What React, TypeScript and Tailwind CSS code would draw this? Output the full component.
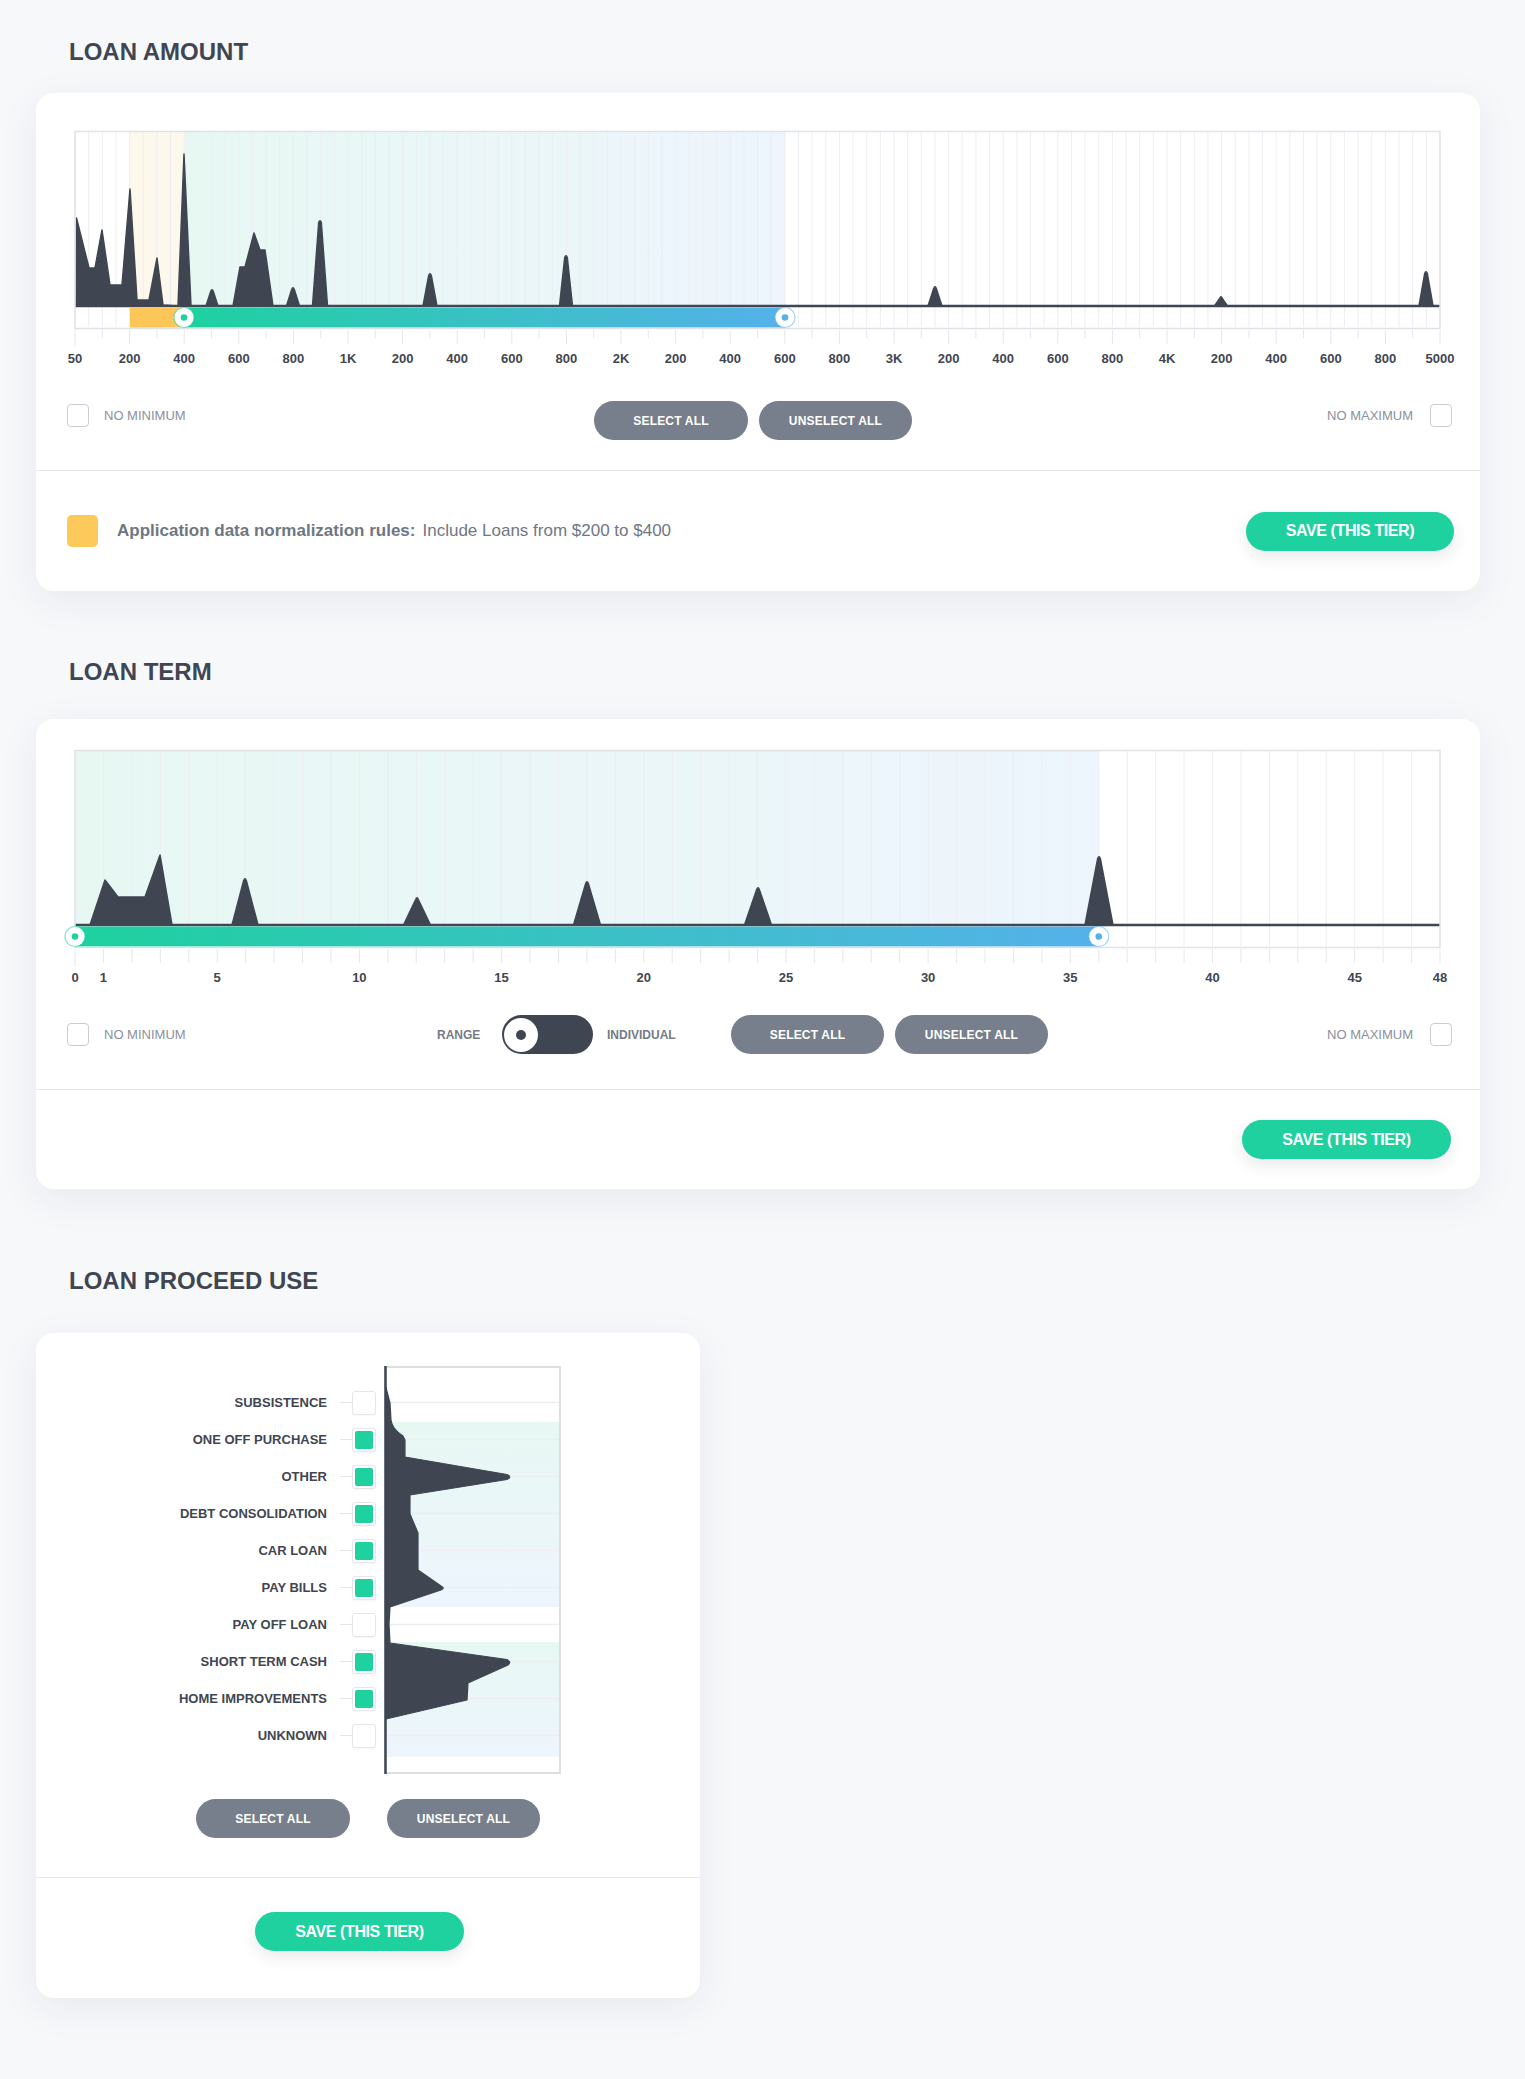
import React from 'react'

// ─── Palette ──────────────────────────────────────────────────────────────────

const DARK = '#3f4651'
const GREEN = '#1ed19f'
const BLUE = '#55b1ea'

// ─── Small building blocks ────────────────────────────────────────────────────

function Title({ children, className }: { children: React.ReactNode; className: string }) {
  return (
    <h2 className={`ml-[33px] text-[24px] leading-[24px] font-bold text-[#3f4651] ${className}`}>
      {children}
    </h2>
  )
}

function CheckBox() {
  return <span className="block w-[22px] h-[23px] rounded-[4px] border-[1.5px] border-[#c9cdd3] bg-white shrink-0" />
}

function GrayButton({ label, className }: { label: string; className: string }) {
  return (
    <button className={`h-[39px] rounded-full bg-[#767f8b] text-white text-[12px] font-bold tracking-[0.2px] ${className}`}>
      {label}
    </button>
  )
}

function SaveButton({ className }: { className: string }) {
  return (
    <button
      className={`h-[39px] rounded-full bg-[#1ed19f] text-white text-[16px] font-bold tracking-[-0.4px] shadow-[0_6px_16px_rgba(30,40,60,0.10)] ${className}`}
    >
      SAVE (THIS TIER)
    </button>
  )
}

function NoMinimum() {
  return (
    <div className="flex items-center gap-[15px]">
      <CheckBox />
      <span className="text-[13px] text-[#8a919b] uppercase">No minimum</span>
    </div>
  )
}

function NoMaximum() {
  return (
    <div className="flex items-center gap-[17px]">
      <span className="text-[13px] text-[#8a919b] uppercase">No maximum</span>
      <CheckBox />
    </div>
  )
}

// ─── Chart helpers ────────────────────────────────────────────────────────────

const BASE = 176

function peak(cx: number, tip: number, hw: number) {
  return `M${cx - hw} ${BASE} L${cx - 1.3} ${tip + 2.5} Q${cx} ${tip - 1} ${cx + 1.3} ${tip + 2.5} L${cx + hw} ${BASE} Z`
}

function poly(points: [number, number][]) {
  return 'M' + points.map(p => `${p[0]} ${p[1]}`).join(' L') + ' Z'
}

function Handle({ cx, color }: { cx: number; color: string }) {
  return (
    <g>
      <circle cx={cx} cy={187.5} r={10} fill="#fff" stroke={color} strokeOpacity={0.55} strokeWidth={1.2} />
      <circle cx={cx} cy={187.5} r={3.3} fill={color} />
    </g>
  )
}

// ─── Loan amount chart ────────────────────────────────────────────────────────

const AMOUNT_LABELS = [
  '50', '200', '400', '600', '800', '1K', '200', '400', '600', '800', '2K', '200', '400',
  '600', '800', '3K', '200', '400', '600', '800', '4K', '200', '400', '600', '800', '5000',
]

function AmountChart() {
  const step = 1365 / 25
  const q = step / 4

  const clusterA: [number, number][] = [
    [40, 176], [40.5, 88], [53, 138], [59, 138], [66, 100], [74, 155], [86, 155], [94, 59],
    [101, 170], [113, 170], [121, 128], [127, 175], [142, 176], [148, 24], [155, 176],
  ]
  const clusterB: [number, number][] = [
    [197, 176], [204, 137], [209, 137], [218, 103], [224, 120], [229, 120], [237, 176],
  ]
  const singles: [number, number, number][] = [
    [176, 159, 6], [257, 157, 6.5], [284, 90, 7.5], [394, 143, 7], [530, 125, 6.5],
    [899, 156, 7], [1185, 166, 6.5], [1390, 141, 7],
  ]

  return (
    <svg width={1444} height={240} className="block">
      <defs>
        <linearGradient id="amtTint" gradientUnits="userSpaceOnUse" x1="149" y1="0" x2="749" y2="0">
          <stop offset="0" stopColor="#e7f8f3" />
          <stop offset="1" stopColor="#eef5fd" />
        </linearGradient>
        <linearGradient id="amtBar" gradientUnits="userSpaceOnUse" x1="148" y1="0" x2="749" y2="0">
          <stop offset="0" stopColor={GREEN} />
          <stop offset="1" stopColor={BLUE} />
        </linearGradient>
      </defs>

      <rect x={39} y={2} width={1365} height={196} fill="#fff" />
      <rect x={94} y={2} width={55} height={174} fill="#fdf8ec" />
      <rect x={149} y={2} width={600} height={174} fill="url(#amtTint)" />

      {Array.from({ length: 99 }, (_, i) => (
        <line key={i} x1={39 + (i + 1) * q} x2={39 + (i + 1) * q} y1={2} y2={197} stroke="#eceef2" strokeWidth={1} />
      ))}

      <g fill={DARK} stroke={DARK} strokeWidth={1.5} strokeLinejoin="round">
        <path d={poly(clusterA)} />
        <path d={poly(clusterB)} />
        {singles.map(([cx, tip, hw], i) => <path key={i} d={peak(cx, tip, hw)} />)}
      </g>
      <line x1={39} x2={1404} y1={BASE} y2={BASE} stroke={DARK} strokeWidth={2.5} />

      <rect x={94} y={177.5} width={54} height={20} fill="#fcc659" />
      <rect x={148} y={177.5} width={601} height={20} fill="url(#amtBar)" />

      <rect x={39} y={1.5} width={1365} height={197} fill="none" stroke="#dfe1e6" strokeWidth={1.5} />

      <Handle cx={148} color={GREEN} />
      <Handle cx={749} color={BLUE} />

      {Array.from({ length: 51 }, (_, i) => (
        <line
          key={i}
          x1={39 + i * step / 2} x2={39 + i * step / 2}
          y1={200} y2={i === 0 ? 217 : i % 2 === 0 ? 214 : 208}
          stroke="#e5e7eb" strokeWidth={1}
        />
      ))}
      {AMOUNT_LABELS.map((l, i) => (
        <text key={i} x={39 + i * step} y={232.5} textAnchor="middle" fontSize={13} fontWeight={700} fill={DARK}>
          {l}
        </text>
      ))}
    </svg>
  )
}

// ─── Loan term chart ──────────────────────────────────────────────────────────

const TERM_LABELS = [0, 1, 5, 10, 15, 20, 25, 30, 35, 40, 45, 48]

function TermChart() {
  const u = 1365 / 48
  const end = 39 + 36 * u

  const cluster: [number, number][] = [
    [54, 176], [69, 131], [82, 148], [109, 148], [124, 106], [136, 176],
  ]
  const singles: [number, number, number][] = [
    [209, 129, 13], [381, 148, 13.5], [551, 132, 13.5], [722, 138, 13.5], [1063, 107, 14],
  ]

  return (
    <svg width={1444} height={240} className="block">
      <defs>
        <linearGradient id="termTint" gradientUnits="userSpaceOnUse" x1="39" y1="0" x2={end} y2="0">
          <stop offset="0" stopColor="#e7f8f3" />
          <stop offset="1" stopColor="#eef5fd" />
        </linearGradient>
        <linearGradient id="termBar" gradientUnits="userSpaceOnUse" x1="39" y1="0" x2={end} y2="0">
          <stop offset="0" stopColor={GREEN} />
          <stop offset="1" stopColor={BLUE} />
        </linearGradient>
      </defs>

      <rect x={39} y={2} width={1365} height={196} fill="#fff" />
      <rect x={39} y={2} width={end - 39} height={174} fill="url(#termTint)" />

      {Array.from({ length: 47 }, (_, i) => (
        <line key={i} x1={39 + (i + 1) * u} x2={39 + (i + 1) * u} y1={2} y2={197} stroke="#eceef2" strokeWidth={1} />
      ))}

      <g fill={DARK} stroke={DARK} strokeWidth={1.5} strokeLinejoin="round">
        <path d={poly(cluster)} />
        {singles.map(([cx, tip, hw], i) => <path key={i} d={peak(cx, tip, hw)} />)}
      </g>
      <line x1={39} x2={1404} y1={BASE} y2={BASE} stroke={DARK} strokeWidth={2.5} />

      <rect x={39} y={177.5} width={end - 39} height={20} fill="url(#termBar)" />

      <rect x={39} y={1.5} width={1365} height={197} fill="none" stroke="#dfe1e6" strokeWidth={1.5} />

      <Handle cx={39} color={GREEN} />
      <Handle cx={end} color={BLUE} />

      {Array.from({ length: 49 }, (_, i) => (
        <line
          key={i}
          x1={39 + i * u} x2={39 + i * u}
          y1={200} y2={i === 0 ? 218 : 214}
          stroke="#e5e7eb" strokeWidth={1}
        />
      ))}
      {TERM_LABELS.map(v => (
        <text key={v} x={39 + v * u} y={232.5} textAnchor="middle" fontSize={13} fontWeight={700} fill={DARK}>
          {v}
        </text>
      ))}
    </svg>
  )
}

// ─── Loan proceed use chart ───────────────────────────────────────────────────

const USES: { label: string; on: boolean }[] = [
  { label: 'Subsistence', on: false },
  { label: 'One off purchase', on: true },
  { label: 'Other', on: true },
  { label: 'Debt consolidation', on: true },
  { label: 'Car loan', on: true },
  { label: 'Pay bills', on: true },
  { label: 'Pay off loan', on: false },
  { label: 'Short term cash', on: true },
  { label: 'Home improvements', on: true },
  { label: 'Unknown', on: false },
]

function UseChart() {
  const area =
    'M1 18 L6 37 L7 54 Q8 63 19 70 L21 74 L21 91 L123 108.5 Q128.5 111 123 113.5 L26 129 L26 148 ' +
    'L34 167 L34 204 L57 220 Q61.5 222 57 224 L6 241 L5 258 L6 277 L123 293.5 Q128.5 296.5 123 299.5 ' +
    'L84 317 L83 334 L2 353 L1 353 Z'

  return (
    <svg width={177} height={408} className="block shrink-0">
      <defs>
        <linearGradient id="useTint" x1="0" y1="0" x2="0" y2="1">
          <stop offset="0" stopColor="#e7f8f3" />
          <stop offset="1" stopColor="#eef5fd" />
        </linearGradient>
      </defs>
      <rect x={0} y={0} width={177} height={408} fill="#fff" />
      <rect x={2} y={56} width={173} height={185} fill="url(#useTint)" />
      <rect x={2} y={276} width={173} height={115} fill="url(#useTint)" />
      {USES.map((_, i) => (
        <line key={i} x1={2} x2={175} y1={36.5 + i * 37} y2={36.5 + i * 37} stroke="#eceef1" strokeWidth={1.5} />
      ))}
      <path d={area} fill={DARK} stroke={DARK} strokeWidth={1.2} strokeLinejoin="round" />
      <rect x={1} y={1} width={175} height={406} fill="none" stroke="#dcdee3" strokeWidth={2} />
      <line x1={1.5} x2={1.5} y1={0} y2={408} stroke={DARK} strokeWidth={2.5} />
    </svg>
  )
}

// ─── Page ─────────────────────────────────────────────────────────────────────

const CARD = 'bg-white rounded-[18px] shadow-[0_10px_40px_rgba(35,45,85,0.07)] overflow-hidden'

export default function App() {
  return (
    <div className="min-h-[2079px] w-full bg-[#f7f8fa] pl-[36px] pt-[40px] font-['Liberation_Sans',Arial,sans-serif]">

      {/* Loan amount */}
      <Title className="">LOAN AMOUNT</Title>
      <div className={`${CARD} mt-[29px] w-[1444px]`}>
        <div className="pt-[37px] pb-[30px] border-b border-[#e6e8ec]">
          <AmountChart />
          <div className="mt-[31px] h-[39px] flex items-start pl-[31px] pr-[28px]">
            <div className="w-[527px] mt-[3px]">
              <NoMinimum />
            </div>
            <div className="flex gap-[11px]">
              <GrayButton label="SELECT ALL" className="w-[154px]" />
              <GrayButton label="UNSELECT ALL" className="w-[153px]" />
            </div>
            <div className="ml-auto mt-[3px]">
              <NoMaximum />
            </div>
          </div>
        </div>
        <div className="h-[120px] flex items-center pl-[31px] pr-[26px]">
          <span className="w-[31px] h-[32px] rounded-[5px] bg-[#fdc95a] shrink-0" />
          <p className="ml-[19px] text-[17px] text-[#6f7783]">
            <span className="font-bold">Application data normalization rules:</span>
            <span className="ml-[7px]">Include Loans from $200 to $400</span>
          </p>
          <SaveButton className="ml-auto w-[208px]" />
        </div>
      </div>

      {/* Loan term */}
      <Title className="mt-[69px]">LOAN TERM</Title>
      <div className={`${CARD} mt-[35px] w-[1444px]`}>
        <div className="pt-[30px] pb-[35px] border-b border-[#e6e8ec]">
          <TermChart />
          <div className="mt-[26px] h-[39px] flex items-center pl-[31px] pr-[28px]">
            <div className="w-[370px]">
              <NoMinimum />
            </div>
            <span className="w-[44px] text-[12px] font-bold text-[#737b87]">RANGE</span>
            <div className="ml-[21px] w-[91px] h-[39px] rounded-full bg-[#3f4651] flex items-center pl-[2px]">
              <span className="w-[34px] h-[34px] rounded-full bg-white flex items-center justify-center">
                <span className="w-[10px] h-[10px] rounded-full bg-[#3f4651]" />
              </span>
            </div>
            <span className="ml-[14px] w-[69px] text-[12px] font-bold text-[#737b87]">INDIVIDUAL</span>
            <div className="ml-[55px] flex gap-[11px]">
              <GrayButton label="SELECT ALL" className="w-[153px]" />
              <GrayButton label="UNSELECT ALL" className="w-[153px]" />
            </div>
            <div className="ml-auto">
              <NoMaximum />
            </div>
          </div>
        </div>
        <div className="h-[99px] flex items-center justify-end pr-[29px]">
          <SaveButton className="w-[209px]" />
        </div>
      </div>

      {/* Loan proceed use */}
      <Title className="mt-[80px]">LOAN PROCEED USE</Title>
      <div className={`${CARD} mt-[40px] w-[664px]`}>
        <div className="pt-[33px] pb-[39px] border-b border-[#e6e8ec]">
          <div className="flex items-start pl-[100px]">
            <div className="w-[240px] pt-[18px]">
              {USES.map(u => (
                <div key={u.label} className="h-[37px] flex items-center justify-end">
                  <span className="text-[13px] font-bold text-[#3f4651] uppercase">{u.label}</span>
                  <span className="ml-[13px] w-[12px] h-[1.5px] bg-[#e3e5e9]" />
                  <span className="w-[24px] h-[24px] rounded-[3px] border border-[#e4e6ea] bg-white flex items-center justify-center shadow-[0_1px_2px_rgba(0,0,0,0.04)]">
                    {u.on && <span className="w-[18px] h-[18px] rounded-[2px] bg-[#1ed19f]" />}
                  </span>
                </div>
              ))}
            </div>
            <div className="ml-[8px]">
              <UseChart />
            </div>
          </div>
          <div className="mt-[25px] ml-[160px] flex gap-[37px]">
            <GrayButton label="SELECT ALL" className="w-[154px]" />
            <GrayButton label="UNSELECT ALL" className="w-[153px]" />
          </div>
        </div>
        <div className="pt-[34px] pb-[47px] pl-[219px]">
          <SaveButton className="w-[209px]" />
        </div>
      </div>
    </div>
  )
}
